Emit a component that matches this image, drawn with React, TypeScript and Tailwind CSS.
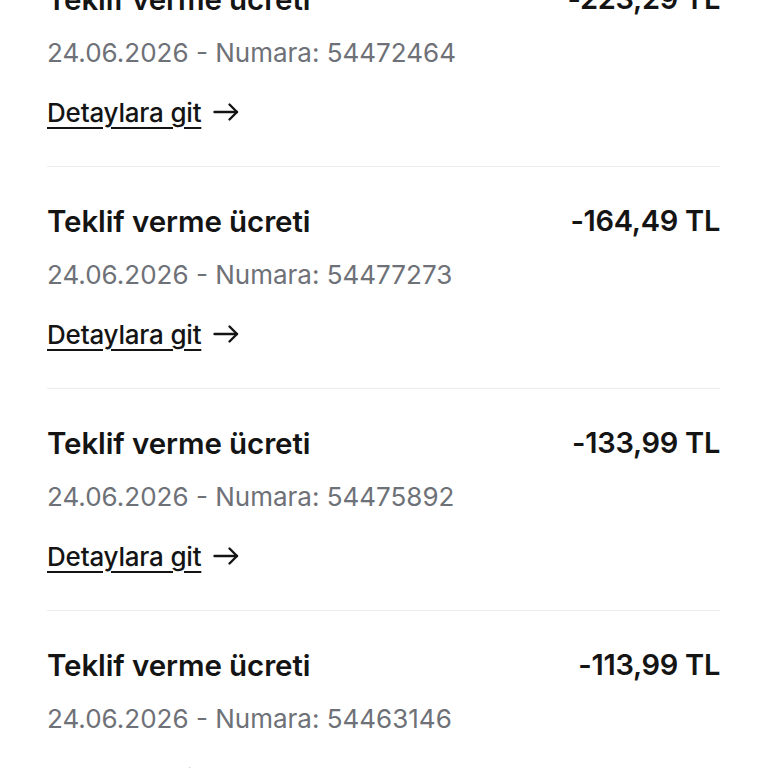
import React from "react";

const items = [
  { amount: "-223,29 TL", date: "24.06.2026", no: "54472464" },
  { amount: "-164,49 TL", date: "24.06.2026", no: "54477273" },
  { amount: "-133,99 TL", date: "24.06.2026", no: "54475892" },
  { amount: "-113,99 TL", date: "24.06.2026", no: "54463146" },
];

function Arrow() {
  return (
    <svg width="26" height="20" viewBox="0 0 26 20" fill="none" stroke="#141414" strokeWidth="2.4" strokeLinecap="round" strokeLinejoin="round">
      <path d="M1.5 10H24" />
      <path d="M16.5 2.5L24 10L16.5 17.5" />
    </svg>
  );
}

export default function App() {
  return (
    <div
      className="h-[768px] w-[768px] overflow-hidden bg-white"
      style={{ fontFamily: "Inter, 'Noto Sans', sans-serif" }}
    >
      <div className="-mt-[56px] pl-[47px] pr-[48px]">
        {items.map((item, i) => (
          <div
            key={item.no}
            className={`pt-[36px] pb-[38px] border-t ${i > 0 ? "border-[#ececec]" : "border-transparent"}`}
          >
            <div className="flex items-center justify-between h-[36px]">
              <span className="text-[29.5px] font-semibold tracking-[-0.1px] text-[#141414]">
                Teklif verme ücreti
              </span>
              <span className="text-[29px] font-semibold tracking-[-0.3px] text-[#141414]">
                {item.amount}
              </span>
            </div>
            <div className="mt-[19px] h-[32px] flex items-center text-[26px] text-[#6e7177]">
              {item.date} - Numara: {item.no}
            </div>
            <div className="mt-[28px] h-[32px] flex items-center gap-[12px]">
              <span className="text-[26px] font-medium tracking-[-0.2px] text-[#141414] underline underline-offset-[5px] decoration-[2px]">
                Detaylara git
              </span>
              <Arrow />
            </div>
          </div>
        ))}
      </div>
    </div>
  );
}
